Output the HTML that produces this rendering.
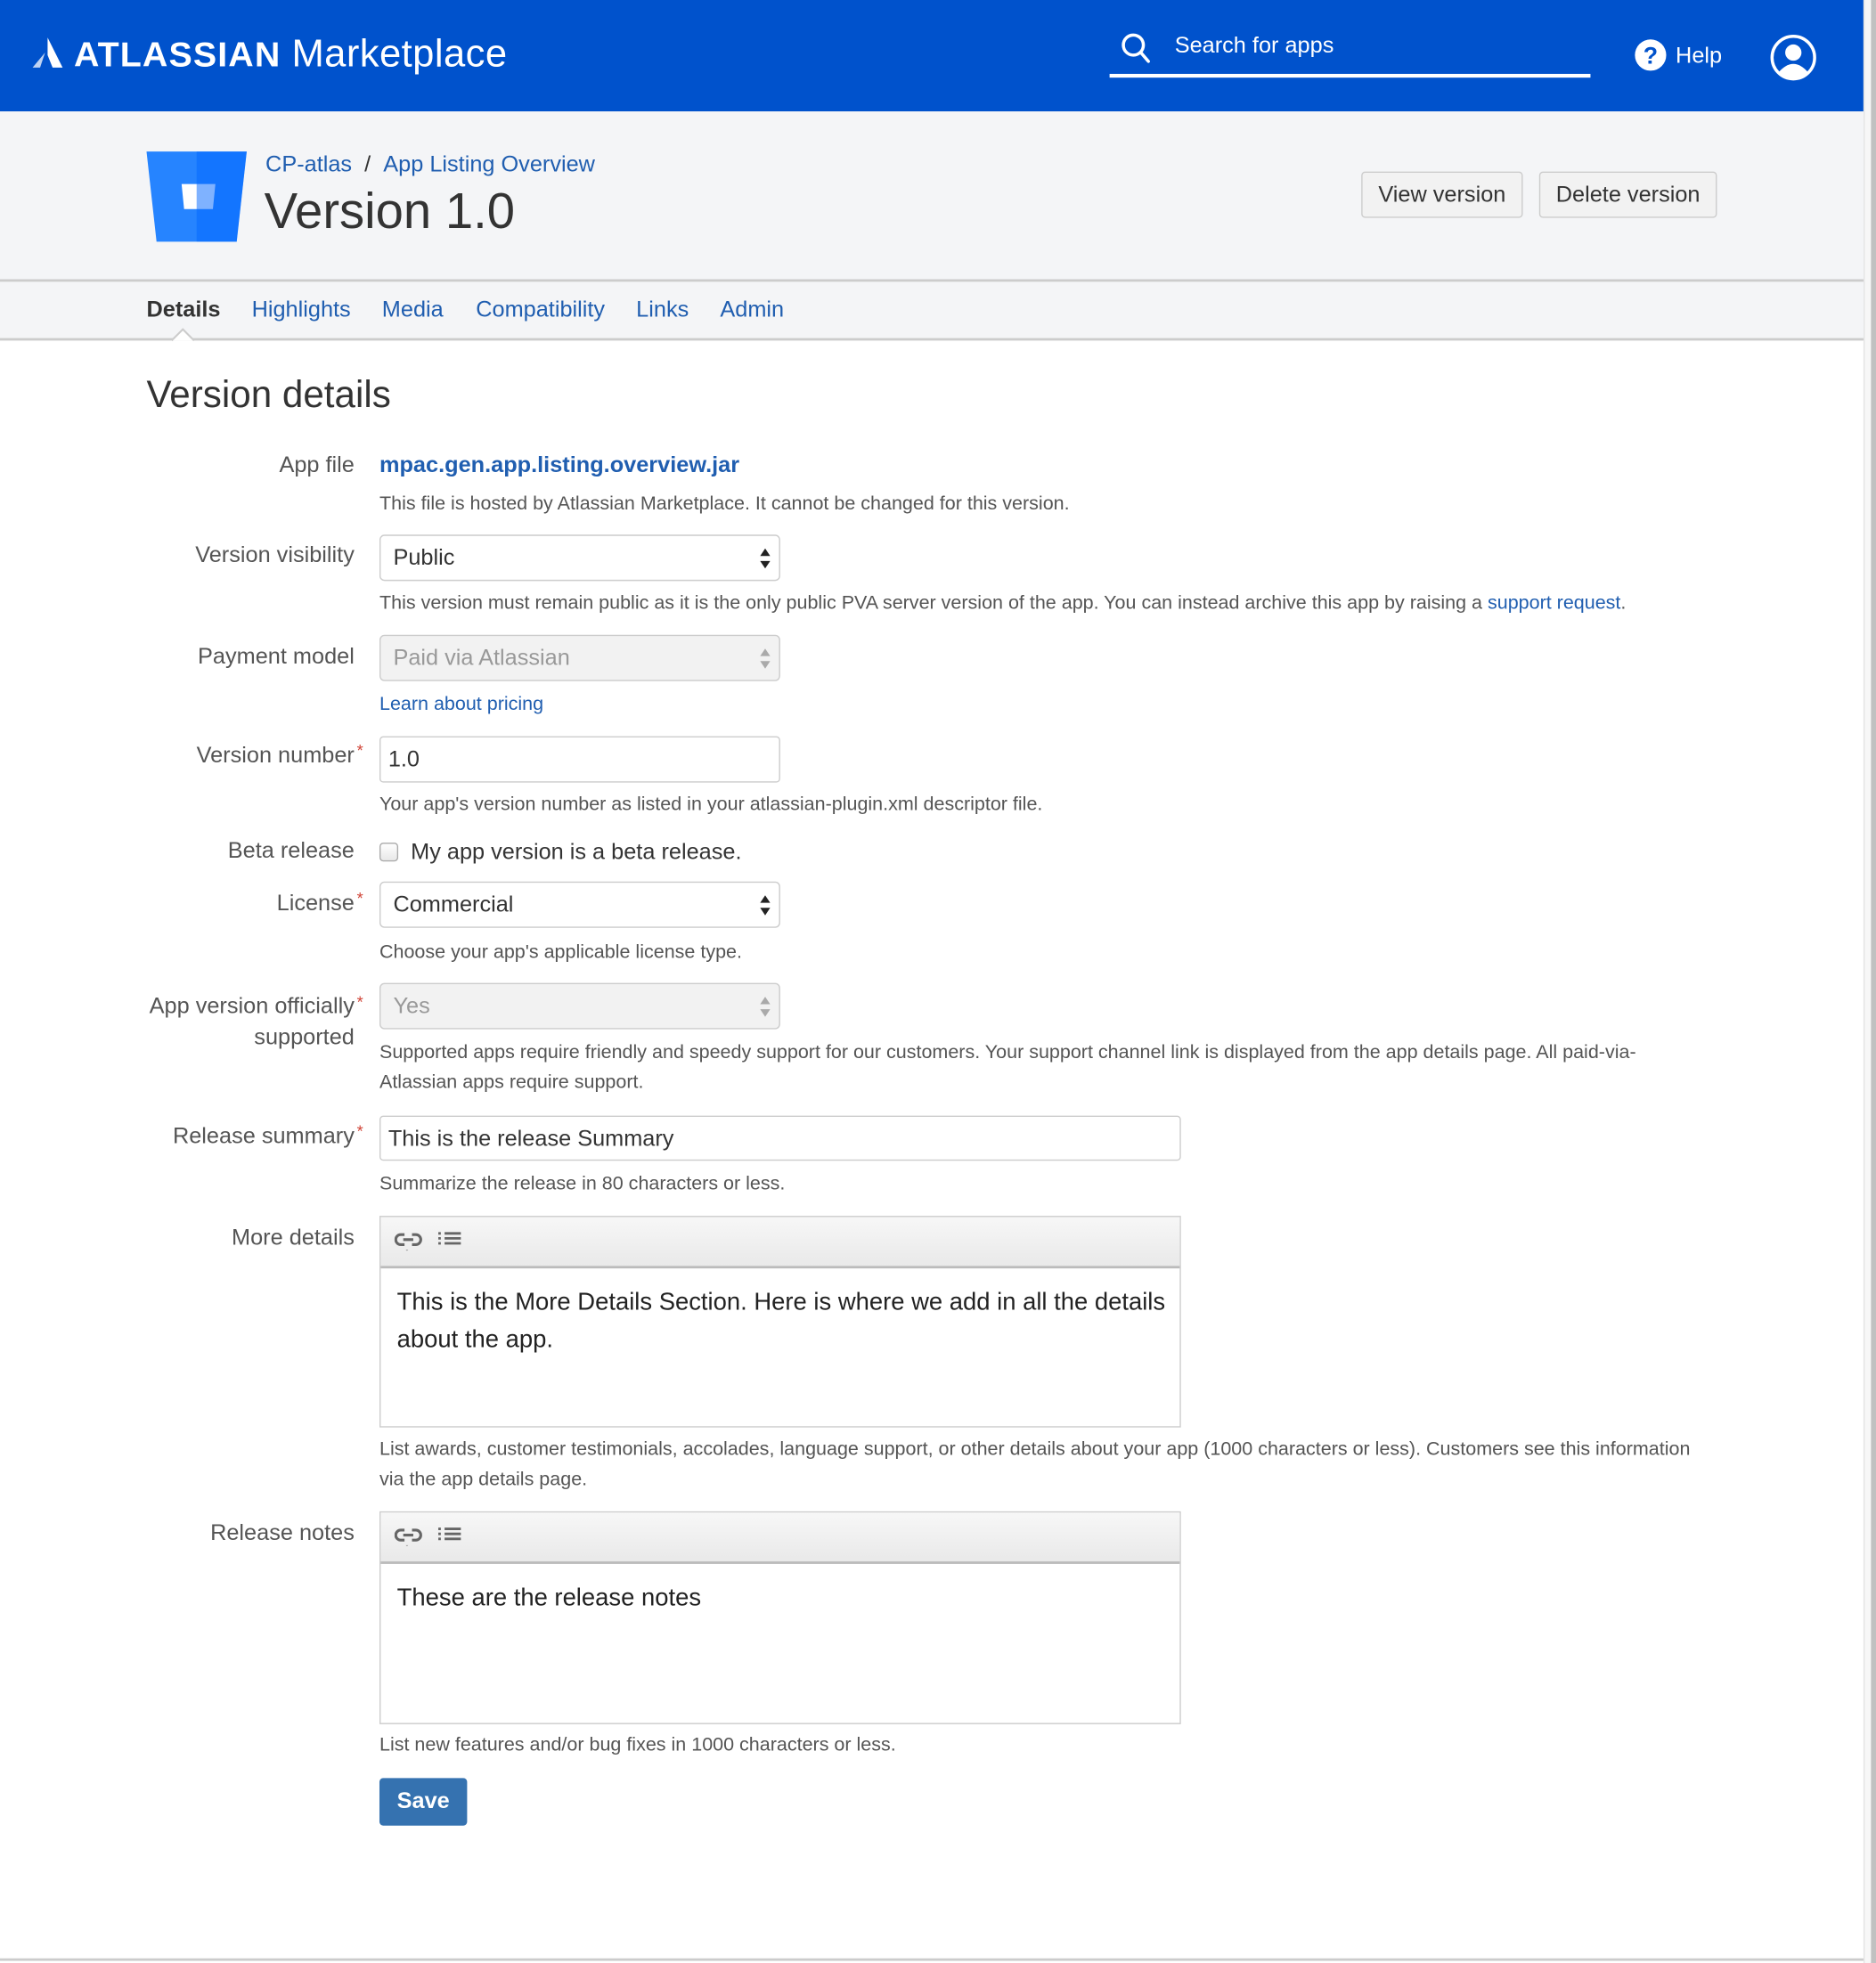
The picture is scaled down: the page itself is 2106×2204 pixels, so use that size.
<!DOCTYPE html>
<html><head><meta charset="utf-8">
<style>
html,body{margin:0;padding:0;width:2106px;height:2204px;overflow:hidden;background:#fff;font-family:"Liberation Sans",Arial,sans-serif;}
#s{position:absolute;left:0;top:0;width:1498px;height:1568px;transform:scale(1.40587);transform-origin:0 0;}
.a{position:absolute;white-space:nowrap;}
.lbl{position:absolute;right:1215px;font-size:18px;color:#555;line-height:20px;text-align:right;white-space:nowrap;}
.req{color:#d04437;font-size:13px;position:absolute;right:-7px;top:-3px;}
.help{position:absolute;left:303px;font-size:15.3px;color:#555;line-height:24px;white-space:nowrap;}
.sel{position:absolute;left:303px;width:320px;height:37px;border:1px solid #ccc;border-radius:4px;background:#fff;box-sizing:border-box;font-size:18px;color:#333;line-height:35px;padding-left:10px;}
.sel.dis{background:#f2f2f2;color:#999;}
.arr{position:absolute;right:7px;top:9px;width:8px;}
.inp{position:absolute;left:303px;height:37px;border:1px solid #ccc;border-radius:3px;box-sizing:border-box;font-size:18px;color:#333;line-height:35px;padding-left:6px;background:#fff;}
.ed{position:absolute;left:303px;width:640px;border:1px solid #ccc;box-sizing:border-box;}
.tb{height:39px;background:linear-gradient(#f7f7f7,#e9e9e9);border-bottom:2px solid #bbb;position:relative;}
.ed .txt{font-size:19.5px;color:#222;line-height:30px;padding:12px 13px;white-space:nowrap;}
a,.lk{color:#205eb0;text-decoration:none;}
.tabs span{position:absolute;top:0;}
</style></head><body>
<div id="s">
<div class="a" style="left:0;top:0;width:1488px;height:89px;background:#0052cc;"></div>
<svg class="a" style="left:25px;top:29px" width="26" height="26" viewBox="0 0 26 26"><path d="M13 1 L25 25 L17 25 L13 15 Z" fill="#fff"/><path d="M11 13 L7 25 L1 25 Z" fill="#fff" opacity=".75"/></svg>
<div class="a" style="left:59px;top:27px;font-size:28px;font-weight:bold;color:#fff;letter-spacing:.8px;line-height:32px">ATLASSIAN <span style="font-weight:normal;font-size:31px;letter-spacing:.3px">Marketplace</span></div>
<svg class="a" style="left:895px;top:26px" width="24" height="26" viewBox="0 0 24 26"><circle cx="10" cy="10" r="8" stroke="#fff" stroke-width="2.5" fill="none"/><path d="M16 16 L22 23" stroke="#fff" stroke-width="2.5" stroke-linecap="round"/></svg>
<div class="a" style="left:938px;top:25px;font-size:18px;color:#fff;line-height:22px">Search for apps</div>
<div class="a" style="left:886px;top:59px;width:384px;height:3px;background:#fff"></div>
<svg class="a" style="left:1305px;top:31px" width="26" height="26" viewBox="0 0 26 26"><circle cx="13" cy="13" r="12.5" fill="#fff"/><text x="13" y="20" font-size="19" font-weight="bold" fill="#0052cc" text-anchor="middle" font-family="Liberation Sans">?</text></svg>
<div class="a" style="left:1338px;top:33px;font-size:18px;color:#fff;line-height:22px">Help</div>
<svg class="a" style="left:1413px;top:27px" width="38" height="38" viewBox="0 0 38 38"><circle cx="19" cy="19" r="17" stroke="#fff" stroke-width="2.5" fill="#0052cc"/><circle cx="19" cy="15" r="6.5" fill="#fff"/><path d="M7 31 Q19 17 31 31 Q19 40 7 31Z" fill="#fff"/></svg>
<div class="a" style="left:1488px;top:0;width:10px;height:1568px;background:#f7f7f7;border-left:1px solid #e4e4e4"></div>
<div class="a" style="left:1494px;top:0;width:4px;height:1568px;background:#c1c1c1"></div>
<div class="a" style="left:0;top:89px;width:1488px;height:183px;background:#f4f5f7"></div>
<div class="a" style="left:0;top:223px;width:1488px;height:2px;background:#ccc"></div>
<div class="a" style="left:0;top:270px;width:1488px;height:2px;background:#ccc"></div>
<svg class="a" style="left:117px;top:119px" width="81" height="75" viewBox="0 0 81 75"><path d="M0 2 L80 2 L72 74 L8 74 Z" fill="#2684ff"/><path d="M28 28 L55 28 L53 48 L30 48 Z" fill="#fff"/><path d="M40 2 L80 2 L72 74 L40 74Z" fill="#0065ff" opacity=".5"/></svg>
<div class="a" style="left:212px;top:120px;font-size:18px;line-height:22px"><span class="lk">CP-atlas</span><span style="color:#333">&nbsp;&nbsp;/&nbsp;&nbsp;</span><span class="lk">App Listing Overview</span></div>
<div class="a" style="left:211px;top:145px;font-size:40px;color:#333;line-height:48px">Version 1.0</div>
<div class="a" style="left:1087px;top:137px;width:129px;height:37px;border:1px solid #ccc;border-radius:3px;background:#f2f2f2;box-sizing:border-box;font-size:18px;color:#333;text-align:center;line-height:35px">View version</div>
<div class="a" style="left:1229px;top:137px;width:142px;height:37px;border:1px solid #ccc;border-radius:3px;background:#f2f2f2;box-sizing:border-box;font-size:18px;color:#333;text-align:center;line-height:35px">Delete version</div>
<div class="a tabs" style="left:0;top:236px;font-size:18px;line-height:22px;width:700px;height:22px">
<span style="left:117px;font-weight:bold;color:#333">Details</span>
<span class="lk" style="left:201px">Highlights</span>
<span class="lk" style="left:305px">Media</span>
<span class="lk" style="left:380px">Compatibility</span>
<span class="lk" style="left:508px">Links</span>
<span class="lk" style="left:575px">Admin</span></div>
<svg class="a" style="left:137px;top:262px" width="18" height="11" viewBox="0 0 18 11"><path d="M0 10 L9 1 L18 10" fill="#fff" stroke="#ccc" stroke-width="1.5"/></svg>
<div class="a" style="left:117px;top:298px;font-size:30px;color:#333;line-height:36px">Version details</div>

<div class="lbl" style="top:361px">App file</div>
<div class="a" style="left:303px;top:360px;font-size:18px;font-weight:bold;line-height:22px"><span class="lk">mpac.gen.app.listing.overview.jar</span></div>
<div class="help" style="top:391px">This file is hosted by Atlassian Marketplace. It cannot be changed for this version.</div>

<div class="lbl" style="top:433px">Version visibility</div>
<div class="sel" style="top:427px">Public<svg class="arr" height="18" viewBox="0 0 8 18"><path d="M0 7L4 1L8 7Z M0 11L4 17L8 11Z" fill="#222"/></svg></div>
<div class="help" style="top:470px">This version must remain public as it is the only public PVA server version of the app. You can instead archive this app by raising a <span class="lk">support request</span>.</div>

<div class="lbl" style="top:514px">Payment model</div>
<div class="sel dis" style="top:507px">Paid via Atlassian<svg class="arr" height="18" viewBox="0 0 8 18"><path d="M0 7L4 1L8 7Z M0 11L4 17L8 11Z" fill="#aaa"/></svg></div>
<div class="help lk" style="top:551px;color:#205eb0">Learn about pricing</div>

<div class="lbl" style="top:593px">Version number<span class="req">*</span></div>
<div class="inp" style="top:588px;width:320px">1.0</div>
<div class="help" style="top:631px">Your app's version number as listed in your atlassian-plugin.xml descriptor file.</div>

<div class="lbl" style="top:669px">Beta release</div>
<div class="a" style="left:303px;top:673px;width:13px;height:13px;border:1px solid #aaa;border-radius:3px;background:linear-gradient(#fff,#e8e8e8)"></div>
<div class="a" style="left:328px;top:669px;font-size:18px;color:#333;line-height:22px">My app version is a beta release.</div>

<div class="lbl" style="top:711px">License<span class="req">*</span></div>
<div class="sel" style="top:704px">Commercial<svg class="arr" height="18" viewBox="0 0 8 18"><path d="M0 7L4 1L8 7Z M0 11L4 17L8 11Z" fill="#222"/></svg></div>
<div class="help" style="top:749px">Choose your app's applicable license type.</div>

<div class="lbl" style="top:791px;line-height:25px">App version officially<span class="req">*</span><br>supported</div>
<div class="sel dis" style="top:785px">Yes<svg class="arr" height="18" viewBox="0 0 8 18"><path d="M0 7L4 1L8 7Z M0 11L4 17L8 11Z" fill="#aaa"/></svg></div>
<div class="help" style="top:829px">Supported apps require friendly and speedy support for our customers. Your support channel link is displayed from the app details page. All paid-via-<br>Atlassian apps require support.</div>

<div class="lbl" style="top:897px">Release summary<span class="req">*</span></div>
<div class="inp" style="top:891px;width:640px;height:36px;line-height:34px">This is the release Summary</div>
<div class="help" style="top:934px">Summarize the release in 80 characters or less.</div>

<div class="lbl" style="top:978px">More details</div>
<div class="ed" style="top:971px;height:169px"><div class="tb">
<svg class="a" style="left:11px;top:11px" width="24" height="18" viewBox="0 0 24 18"><path d="M8 3 H5 a4 4 0 0 0 0 8 H8 M14 3 H17 a4 4 0 0 1 0 8 H14 M7 7 H15" stroke="#666" stroke-width="2.2" fill="none"/><path d="M9 15 L11 15 L10 16Z" fill="#999"/></svg>
<svg class="a" style="left:45px;top:10px" width="20" height="16" viewBox="0 0 20 16"><path d="M1 3h2M6 3h13M1 7h2M6 7h13M1 11h2M6 11h13" stroke="#666" stroke-width="2"/></svg>
</div><div class="txt">This is the More Details Section. Here is where we add in all the details<br>about the app.</div></div>
<div class="help" style="top:1146px">List awards, customer testimonials, accolades, language support, or other details about your app (1000 characters or less). Customers see this information<br>via the app details page.</div>

<div class="lbl" style="top:1214px">Release notes</div>
<div class="ed" style="top:1207px;height:170px"><div class="tb">
<svg class="a" style="left:11px;top:11px" width="24" height="18" viewBox="0 0 24 18"><path d="M8 3 H5 a4 4 0 0 0 0 8 H8 M14 3 H17 a4 4 0 0 1 0 8 H14 M7 7 H15" stroke="#666" stroke-width="2.2" fill="none"/><path d="M9 15 L11 15 L10 16Z" fill="#999"/></svg>
<svg class="a" style="left:45px;top:10px" width="20" height="16" viewBox="0 0 20 16"><path d="M1 3h2M6 3h13M1 7h2M6 7h13M1 11h2M6 11h13" stroke="#666" stroke-width="2"/></svg>
</div><div class="txt">These are the release notes</div></div>
<div class="help" style="top:1382px">List new features and/or bug fixes in 1000 characters or less.</div>

<div class="a" style="left:303px;top:1420px;width:70px;height:38px;background:#3572b0;border-radius:3px;color:#fff;font-weight:bold;font-size:18px;text-align:center;line-height:37px">Save</div>

<div class="a" style="left:0;top:1564px;width:1488px;height:2px;background:#ccc"></div>
</div>
</body></html>
